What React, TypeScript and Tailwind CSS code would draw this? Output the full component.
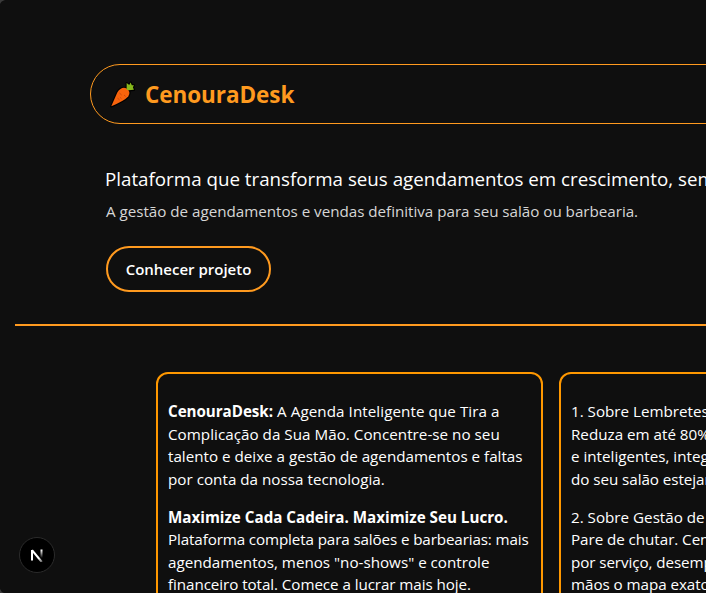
function Carrot() {
  return (
    <svg viewBox="0 0 24 26" className="relative -left-[1.5px] h-[27px] w-[25px] shrink-0">
      <g stroke="#000" strokeWidth="2.2" strokeLinejoin="round">
        <path d="M1.2 24.4 L7 11 Q11 5 16 7.2 Q20.5 10.5 17.5 15 Q14 19 1.2 24.4Z" fill="#000" />
        <path d="M16 8.5 L16 2 L18.5 3.8 L19.8 1.5 L21 4 L23 4 L22 6 L23 8.5 L17.5 9Z" fill="#000" />
      </g>
      <path d="M1.2 24.4 L7 11 Q11 5 16 7.2 Q20.5 10.5 17.5 15 Q14 19 1.2 24.4Z" fill="#f7630c" />
      <path d="M16 8.5 L16 2 L18.5 3.8 L19.8 1.5 L21 4 L23 4 L22 6 L23 8.5 L17.5 9Z" fill="#86b81c" />
      <path d="M9 11.5l2.2 2M13.5 13.5l1.5 1.4M7.2 16.5l2 1.7M11 17l-1.3-1.2" stroke="#c2410c" strokeWidth="0.8" fill="none" />
    </svg>
  );
}

function DevBadge() {
  return (
    <div className="absolute top-[537px] left-[19px] flex size-9 items-center justify-center rounded-full border border-[#2b2b2b] bg-black">
      <svg viewBox="0 0 14 14" className="size-3.5" fill="none">
        <defs>
          <linearGradient id="stem" x1="0" y1="2" x2="0" y2="10" gradientUnits="userSpaceOnUse">
            <stop stopColor="#fff" />
            <stop offset="1" stopColor="#fff" stopOpacity="0" />
          </linearGradient>
          <linearGradient id="diag" x1="9" y1="10" x2="13" y2="15" gradientUnits="userSpaceOnUse">
            <stop stopColor="#fff" />
            <stop offset="1" stopColor="#fff" stopOpacity="0.2" />
          </linearGradient>
        </defs>
        <path d="M2 12.5V2" stroke="#fff" strokeWidth="2" />
        <path d="M2 2.2L11.8 14" stroke="url(#diag)" strokeWidth="2.1" />
        <path d="M11.5 1.5v8.5" stroke="url(#stem)" strokeWidth="2" />
      </svg>
    </div>
  );
}

export default function App() {
  return (
    <div className="relative h-[593px] w-[706px] overflow-hidden bg-[#0f0f0f] font-['Open_Sans',sans-serif] text-white">
      <div className="flex w-[1500px] flex-col pt-16 pl-[15px]">
        <header className="ml-[75px] flex h-[60px] w-[1300px] items-center rounded-full border border-[#ff9a1f] pl-5">
          <Carrot />
          <h1 className="mt-0.5 ml-[9px] text-[22.5px] leading-9 font-bold tracking-[-0.07px] text-[#ff9a1f]">CenouraDesk</h1>
        </header>

        <section className="mt-10 ml-[91px] flex flex-col items-start">
          <h2 className="-ml-px text-[18.75px] leading-[30px] whitespace-nowrap">Plataforma que transforma seus agendamentos em crescimento, sem complicação.</h2>
          <p className="mt-[5px] text-[15.2px] leading-6 tracking-[-0.02px] whitespace-nowrap text-[#d6d6d6]">A gestão de agendamentos e vendas definitiva para seu salão ou barbearia.</p>
          <button className="mt-[23px] h-[46px] w-[165px] rounded-full border-2 border-[#ff9a1f] text-[15px] font-semibold whitespace-nowrap">Conhecer projeto</button>
        </section>

        <hr className="mt-8 border-t-2 border-[#ff9a1f]" />

        <main className="mt-[46px] ml-[141px] flex gap-4 text-[15.2px] leading-[22.5px] whitespace-nowrap">
          <article className="flex h-[400px] w-[387px] flex-col gap-[15.5px] rounded-xl border-2 border-[#ff9800] px-2.5 pt-[26px]">
            <p>
              <span className="block tracking-[0.07px]"><b className="tracking-[-0.05px]">CenouraDesk:</b> A Agenda Inteligente que Tira a</span>
              <span className="block tracking-[0.03px]">Complicação da Sua Mão. Concentre-se no seu</span>
              <span className="block">talento e deixe a gestão de agendamentos e faltas</span>
              <span className="block tracking-[0.02px]">por conta da nossa tecnologia.</span>
            </p>
            <p>
              <b className="block">Maximize Cada Cadeira. Maximize Seu Lucro.</b>
              <span className="block tracking-[-0.12px]">Plataforma completa para salões e barbearias: mais</span>
              <span className="block">agendamentos, menos "no-shows" e controle</span>
              <span className="block tracking-[-0.07px]">financeiro total. Comece a lucrar mais hoje.</span>
            </p>
          </article>
          <article className="flex h-[400px] w-[387px] flex-col gap-[15.5px] rounded-xl border-2 border-[#ff9800] px-2.5 pt-[26px]">
            <p>
              <span className="block">1. Sobre Lembretes Automáticos</span>
              <span className="block">Reduza em até 80% as faltas</span>
              <span className="block">e inteligentes, integrados</span>
              <span className="block tracking-[-0.05px]">do seu salão estejam</span>
            </p>
            <p>
              <span className="block">2. Sobre Gestão de Vendas</span>
              <span className="block tracking-[-0.05px]">Pare de chutar. CenouraDesk</span>
              <span className="block tracking-[-0.08px]">por serviço, desempenho</span>
              <span className="block tracking-[-0.05px]">mãos o mapa exato</span>
            </p>
          </article>
        </main>
      </div>
      <DevBadge />
      <svg viewBox="0 0 6 593" className="absolute top-0 left-0 h-[593px] w-1.5" fill="#3a3a3a">
        <path d="M0 0H5Q1 1 0 4ZM0 593H4Q1 592 0 589Z" />
      </svg>
    </div>
  );
}
